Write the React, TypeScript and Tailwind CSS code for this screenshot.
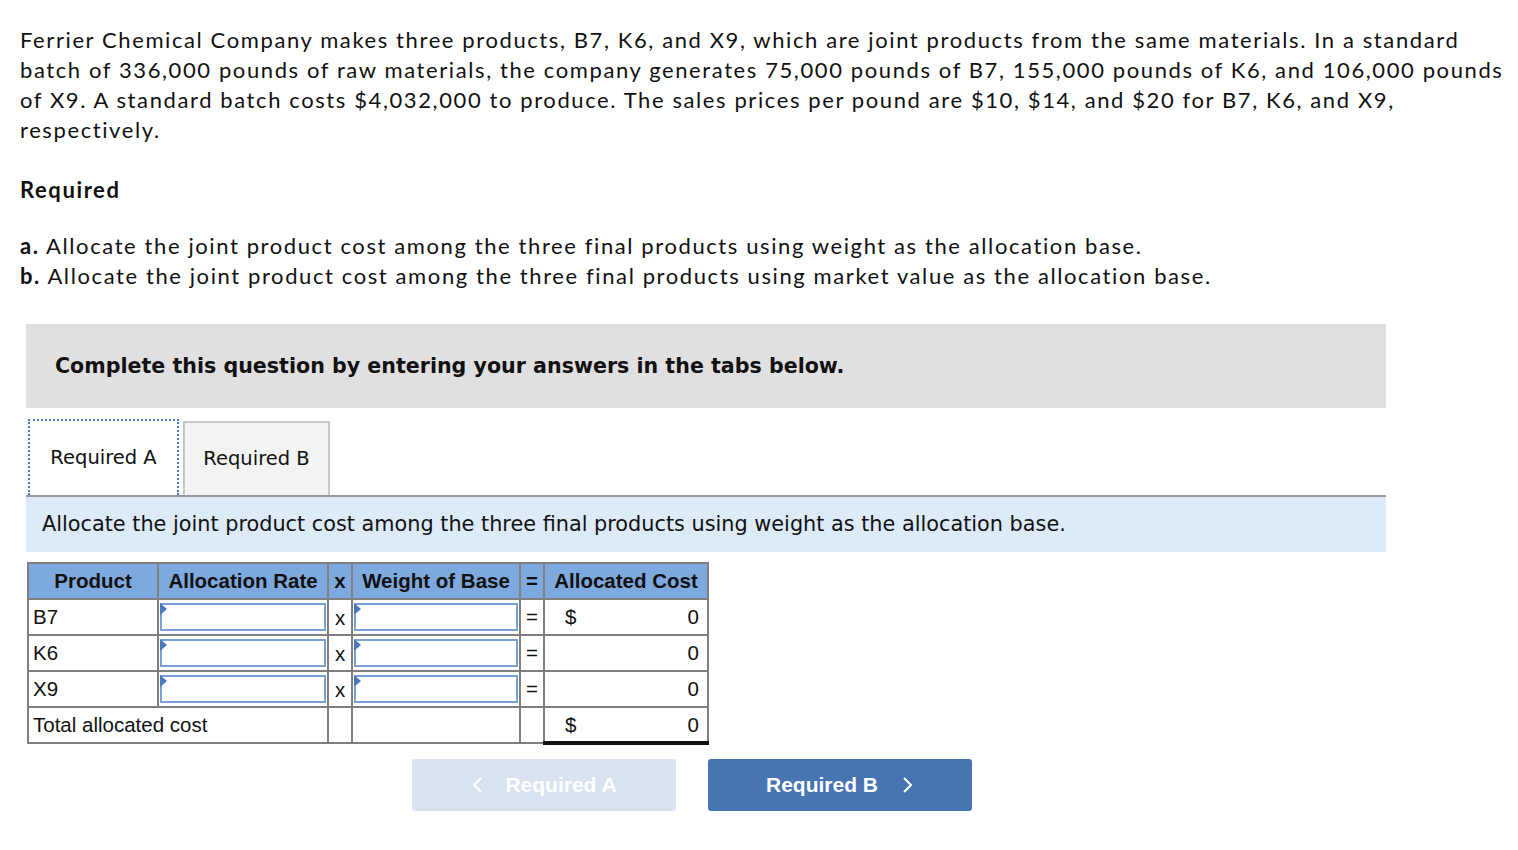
import React from 'react'

const rows = [
    { name: 'B7', dollar: true },
    { name: 'K6', dollar: false },
    { name: 'X9', dollar: false }
]

function InputCell() {
    return (
        <td className="border-2 border-[#7f7f7f] p-[1px]">
            <div className="relative h-[28px] border-2 border-[#7aa0d8] bg-white">
                <span className="absolute -left-[2px] -top-[2px] h-0 w-0 border-y-[6px] border-l-[7px] border-y-transparent border-l-[#4b78bd]" />
            </div>
        </td>
    )
}

export default function App() {
    return (
        <div className="min-h-[850px] bg-white px-[20px] pt-[25px] text-[#111]">
            <div className="font-['Lato',sans-serif] text-[22px] leading-[30px] tracking-[1.6px]">
                <p className="w-[1492px]">
                    Ferrier Chemical Company makes three products, B7, K6, and X9, which are joint products from the same materials. In a standard batch of 336,000 pounds of raw materials, the company generates 75,000 pounds of B7, 155,000 pounds of K6, and 106,000 pounds of X9. A standard batch costs $4,032,000 to produce. The sales prices per pound are $10, $14, and $20 for B7, K6, and X9, respectively.
                </p>
                <p className="mt-[30px] font-bold">Required</p>
                <p className="mt-[26px]">
                    <span className="font-bold">a.</span> Allocate the joint product cost among the three final products using weight as the allocation base.
                </p>
                <p>
                    <span className="font-bold">b.</span> Allocate the joint product cost among the three final products using market value as the allocation base.
                </p>
            </div>

            <div className="ml-[6px] mt-[33px] w-[1360px] font-['DejaVu_Sans',Verdana,sans-serif]">
                <div className="flex h-[84px] items-center bg-[#e0e0e0] px-[29px] text-[20.6px] font-bold text-[#111]">
                    Complete this question by entering your answers in the tabs below.
                </div>

                <div className="mt-[11px] flex items-end gap-[4px] border-b-2 border-[#999] pl-[2px]">
                    <div className="flex h-[76px] w-[151px] items-center justify-center border-2 border-b-0 border-dotted border-[#4b78bd] bg-white text-[19.5px] text-[#111]">
                        Required A
                    </div>
                    <div className="mb-0 flex h-[74px] w-[147px] items-center justify-center border-2 border-b-0 border-[#c8c8c8] bg-[#f3f3f3] text-[19.5px] text-[#111]">
                        Required B
                    </div>
                </div>

                <div className="flex h-[55px] items-center bg-[#ddeaf8] px-[16px] text-[20.8px] text-[#111]">
                    Allocate the joint product cost among the three final products using weight as the allocation base.
                </div>

                <table className="ml-[1px] mt-[10px] border-collapse font-['Liberation_Sans',Arial,sans-serif] text-[20.5px] leading-[28px] text-[#111]">
                    <thead>
                        <tr className="h-[36px] bg-[#7ea9df] font-bold">
                            <th className="w-[130px] border-2 border-[#7f7f7f] font-bold">Product</th>
                            <th className="w-[170px] border-2 border-[#7f7f7f] font-bold">Allocation Rate</th>
                            <th className="w-[24px] border-2 border-[#7f7f7f] font-bold">x</th>
                            <th className="w-[168px] border-2 border-[#7f7f7f] font-bold">Weight of Base</th>
                            <th className="w-[24px] border-2 border-[#7f7f7f] font-bold">=</th>
                            <th className="w-[164px] border-2 border-[#7f7f7f] font-bold">Allocated Cost</th>
                        </tr>
                    </thead>
                    <tbody>
                        {rows.map(row => (
                            <tr key={row.name} className="h-[36px]">
                                <td className="border-2 border-[#7f7f7f] px-[4px]">{row.name}</td>
                                <InputCell />
                                <td className="border-2 border-[#7f7f7f] pt-[2px] text-center">x</td>
                                <InputCell />
                                <td className="border-2 border-[#7f7f7f] text-center">=</td>
                                <td className="border-2 border-[#7f7f7f] px-[8px]">
                                    <div className="flex justify-between pl-[12px]">
                                        <span>{row.dollar ? '$' : ''}</span>
                                        <span>0</span>
                                    </div>
                                </td>
                            </tr>
                        ))}
                        <tr className="h-[36px]">
                            <td colSpan={2} className="border-2 border-[#7f7f7f] px-[4px]">
                                Total allocated cost
                            </td>
                            <td className="border-2 border-[#7f7f7f]" />
                            <td className="border-2 border-[#7f7f7f]" />
                            <td className="border-2 border-[#7f7f7f]" />
                            <td className="border-2 border-b-[4px] border-[#7f7f7f] border-t-[#111] border-b-[#111] px-[8px]">
                                <div className="flex justify-between pl-[12px]">
                                    <span>$</span>
                                    <span>0</span>
                                </div>
                            </td>
                        </tr>
                    </tbody>
                </table>

                <div className="ml-[386px] mt-[14px] flex gap-[32px] font-['Liberation_Sans',Arial,sans-serif] text-[21px] font-bold text-white">
                    <button
                        type="button"
                        className="flex h-[52px] w-[264px] items-center justify-center gap-[20px] rounded-[3px] bg-[#d9e3ef]"
                    >
                        <svg width="14" height="18" viewBox="0 0 14 18" fill="none">
                            <path d="M10 2 L3 9 L10 16" stroke="white" strokeWidth="2" />
                        </svg>
                        Required A
                    </button>
                    <button
                        type="button"
                        className="flex h-[52px] w-[264px] items-center justify-center gap-[22px] rounded-[3px] bg-[#4774b3]"
                    >
                        Required B
                        <svg width="14" height="18" viewBox="0 0 14 18" fill="none">
                            <path d="M4 2 L11 9 L4 16" stroke="white" strokeWidth="2" />
                        </svg>
                    </button>
                </div>
            </div>
        </div>
    )
}
